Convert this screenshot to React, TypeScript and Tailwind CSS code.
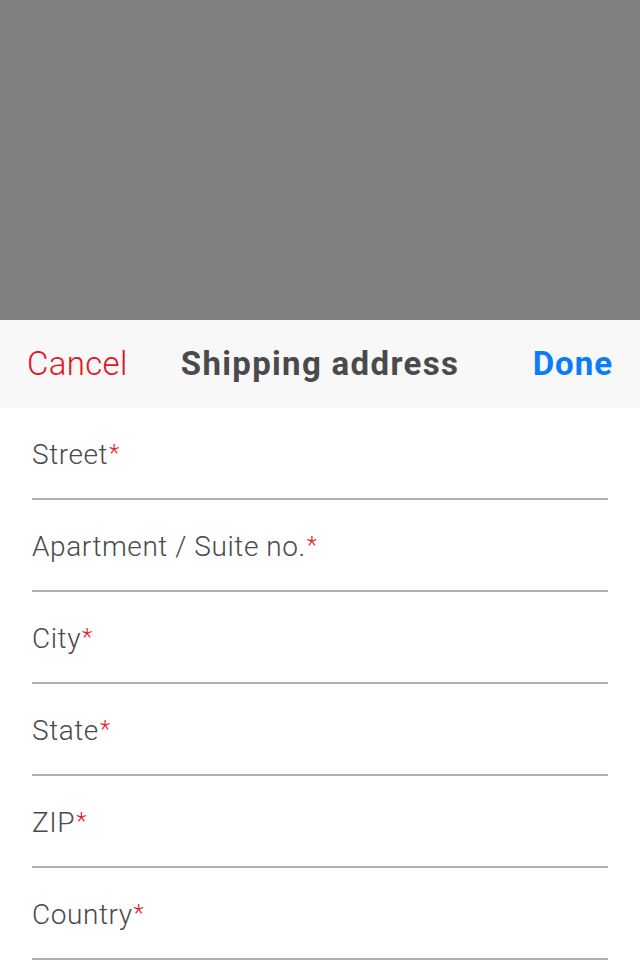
const FIELDS = ["Street", "Apartment / Suite no.", "City", "State", "ZIP", "Country"];

export default function App() {
  return (
    <main className="min-h-screen bg-white font-['Roboto',sans-serif] text-[#4a4a4a]">
      <div className="h-[320px] bg-[#808080]" />

      <header className="grid h-[88px] grid-cols-[1fr_auto_1fr] items-center bg-[#f8f8f8] px-[27px] text-[33px] leading-[40px]">
        <button className="justify-self-start font-light tracking-[0.01em] text-[#e4131f]">Cancel</button>
        <h1 className="font-bold tracking-[0.04em]">Shipping address</h1>
        <button className="justify-self-end font-bold tracking-[0.03em] text-[#0a7aff]">Done</button>
      </header>

      <form className="px-8">
        {FIELDS.map((label) => (
          <div key={label} className="h-[92px] border-b-2 border-[#b0b0b0] pt-[31px]">
            <label className="text-[28px] font-light leading-[32px] tracking-[0.02em]">
              {label}
              <span className="relative -top-[3px] ml-[1px] text-[24px] text-[#e4131f]">*</span>
            </label>
          </div>
        ))}
      </form>
    </main>
  );
}
